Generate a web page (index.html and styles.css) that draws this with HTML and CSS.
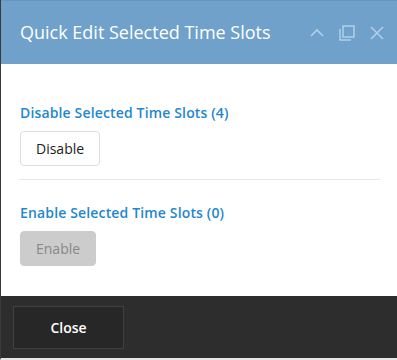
FILE: index.html
```html
<!DOCTYPE html>
<html lang="en">
  <head>
    <meta charset="UTF-8" />
    <meta name="viewport" content="width=device-width, initial-scale=1.0" />
    <title>Quick Edit</title>
    <link rel="stylesheet" href="styles.css">
  </head>
  <body>
    <div class="dialog">
      <div class="dialog-header">
        <h1 class="dialog-title">Quick Edit Selected Time Slots</h1>
        <div class="header-icons">
          <svg width="16" height="16" viewBox="0 0 16 16"><path d="M2 11 L8 5 L14 11" fill="none" stroke="#b3cfe7" stroke-width="1.6"/></svg>
          <svg width="18" height="18" viewBox="0 0 18 18"><rect x="5" y="2" width="11" height="11" fill="none" stroke="#b3cfe7" stroke-width="1.5"/><path d="M2 5 V16 H13" fill="none" stroke="#b3cfe7" stroke-width="1.5"/></svg>
          <svg width="16" height="16" viewBox="0 0 16 16"><path d="M2 2 L14 14 M14 2 L2 14" fill="none" stroke="#b3cfe7" stroke-width="1.6"/></svg>
        </div>
      </div>

      <div class="dialog-body">
        <div class="section">
          <h2 class="section-title">Disable Selected Time Slots (4)</h2>
          <button class="btn btn-light">Disable</button>
        </div>
        <div class="section section-last">
          <h2 class="section-title">Enable Selected Time Slots (0)</h2>
          <button class="btn btn-disabled" disabled>Enable</button>
        </div>
      </div>

      <div class="dialog-footer">
        <button class="btn-close">Close</button>
      </div>
    </div>
  </body>
</html>
```

FILE: styles.css
```css
body {
  margin: 0;
  font-family: "Open Sans", Arial, sans-serif;
  background: #ffffff;
}

.dialog {
  width: 397px;
  height: 360px;
  display: flex;
  flex-direction: column;
  border-left: 1px solid #3a3a3a;
  box-sizing: border-box;
  border-bottom: 2px solid #e6e6e6;
}

.dialog-header {
  height: 64px;
  background-color: #6fa1ca;
  border-top: 1px solid #6694bc;
  box-sizing: border-box;
  display: flex;
  align-items: center;
  justify-content: space-between;
  padding: 0 12px 0 19px;
}

.dialog-title {
  margin: 0;
  font-size: 18px;
  font-weight: 400;
  color: #ffffff;
  margin-top: -1px;
}

.header-icons {
  display: flex;
  align-items: center;
  gap: 13px;
}

.dialog-body {
  flex: 1;
  padding: 0 17px 0 18px;
}

.section {
  padding: 39px 0 13px 1px;
  border-bottom: 1px solid #e8e8e8;
}

.section-last {
  border-bottom: none;
  padding-top: 23px;
}

.section-title {
  margin: 0 0 9px 0;
  font-size: 14px;
  font-weight: 600;
  letter-spacing: 0.15px;
  color: #1f87d0;
}

.btn {
  font-family: "Open Sans", Arial, sans-serif;
  font-size: 14px;
  height: 35px;
  border-radius: 4px;
  padding: 0 15px;
}

.btn-light {
  background: #ffffff;
  border: 1px solid #dedede;
  color: #222222;
}

.btn-disabled {
  background: #cccccc;
  border: 1px solid #cccccc;
  color: #888888;
}

.dialog-footer {
  height: 62px;
  background: #2d2d2d;
  padding: 10px 0 0 12px;
  box-sizing: border-box;
}

.btn-close {
  width: 111px;
  height: 43px;
  background: #272727;
  border: 1px solid #404040;
  color: #ffffff;
  font-family: "Open Sans", Arial, sans-serif;
  font-size: 14px;
  font-weight: 600;
}
```
